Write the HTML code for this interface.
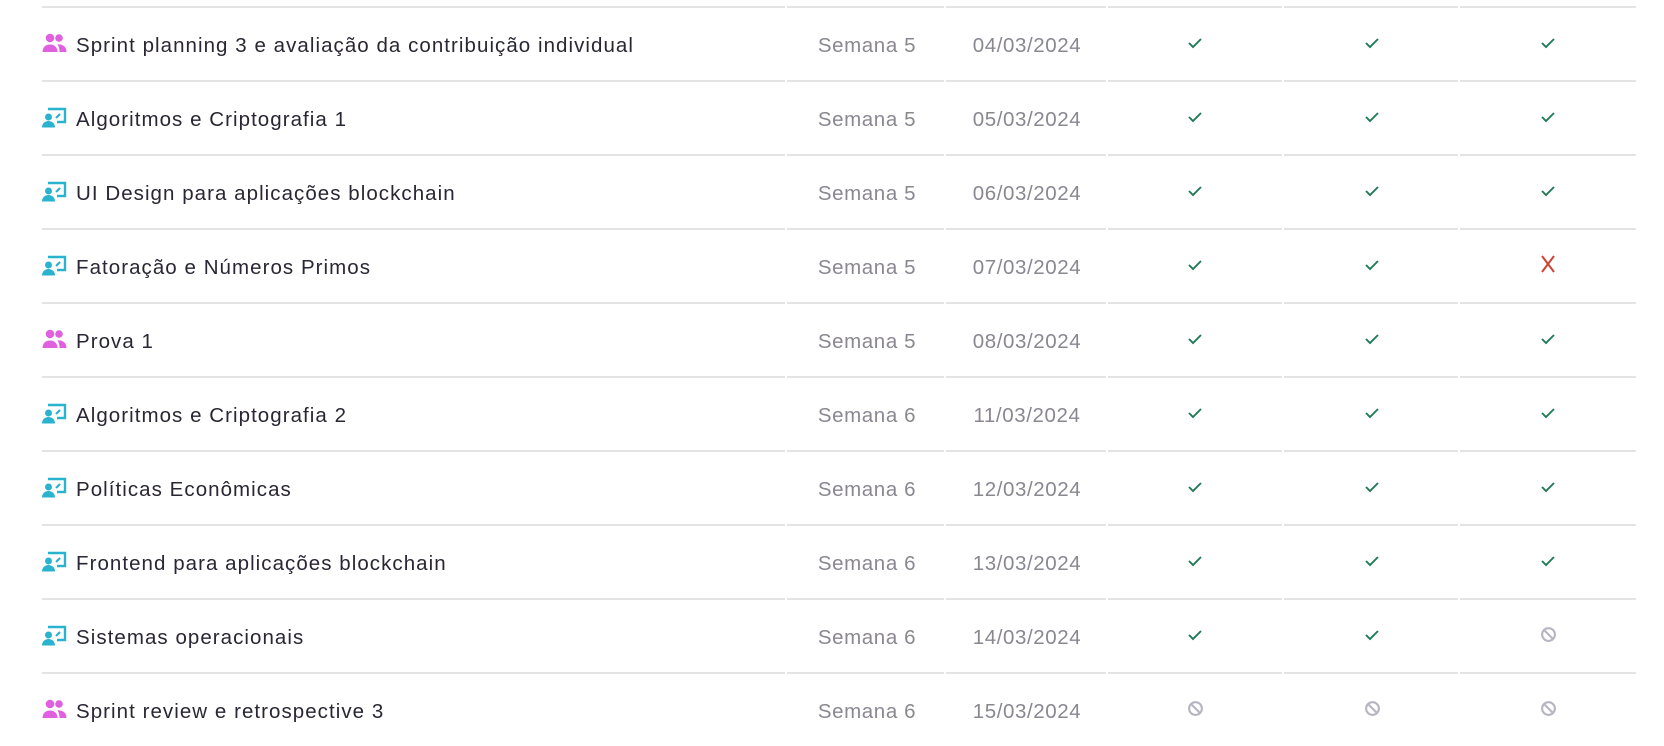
<!DOCTYPE html>
<html><head><meta charset="utf-8"><style>
body{margin:0;width:1664px;height:721px;background:#fff;overflow:hidden;font-family:"Liberation Sans",sans-serif;position:relative}
.row{position:absolute;left:0;width:1664px;height:74px}
.b{position:absolute;top:0;height:2px;background:#e3e3e3}
.t{position:absolute;left:76px;top:28px;font-size:20.5px;line-height:24px;letter-spacing:1.05px;color:#2a2633}
.s{position:absolute;top:28px;font-size:20.5px;line-height:24px;letter-spacing:0.6px;color:#8a8791;text-align:center}
.ic{position:absolute;left:42px;top:27px}
.c{position:absolute}
</style></head><body>
<div id="r"></div>
<script>
const rows=[
["p","Sprint planning 3 e avaliação da contribuição individual","Semana 5","04/03/2024","ccc"],
["t","Algoritmos e Criptografia 1","Semana 5","05/03/2024","ccc"],
["t","UI Design para aplicações blockchain","Semana 5","06/03/2024","ccc"],
["t","Fatoração e Números Primos","Semana 5","07/03/2024","ccx"],
["p","Prova 1","Semana 5","08/03/2024","ccc"],
["t","Algoritmos e Criptografia 2","Semana 6","11/03/2024","ccc"],
["t","Políticas Econômicas","Semana 6","12/03/2024","ccc"],
["t","Frontend para aplicações blockchain","Semana 6","13/03/2024","ccc"],
["t","Sistemas operacionais","Semana 6","14/03/2024","ccn"],
["p","Sprint review e retrospective 3","Semana 6","15/03/2024","nnn"]];
const ppl='<svg width="25" height="20" viewBox="0 0 25 20"><circle cx="8" cy="5" r="4.3" fill="#e060e0"/><circle cx="17" cy="5" r="3.8" fill="#e060e0"/><path d="M0.5 19c0-5 3.5-7.5 7.5-7.5s7.5 2.5 7.5 7.5z" fill="#e060e0"/><path d="M15.5 11.2c5 0 9 2 9 7.8h-7c0-3.5-0.8-5.8-2-7.8z" fill="#e060e0"/></svg>';
const tch='<svg width="25" height="21" viewBox="0 0 25 21"><path d="M6 2h17v13h-8" fill="none" stroke="#2ab3cf" stroke-width="2.4"/><path d="M14 11l4-4" stroke="#2ab3cf" stroke-width="2.2"/><circle cx="6.5" cy="10" r="3.5" fill="#2ab3cf"/><path d="M0 20.5c0-4 3-6.5 6.5-6.5s6.5 2.5 6.5 6.5z" fill="#2ab3cf"/></svg>';
const chk='<svg width="16" height="14" viewBox="0 0 16 14"><path d="M2 7l4 4 8-8" fill="none" stroke="#1f7a55" stroke-width="1.9"/></svg>';
const xx='<svg width="16" height="18" viewBox="0 0 16 18"><path d="M2 1l12 16M14 1L2 17" stroke="#cc4433" stroke-width="2"/></svg>';
const no='<svg width="17" height="17" viewBox="0 0 16 16"><circle cx="8" cy="8" r="6" fill="none" stroke="#b8b5c2" stroke-width="2"/><path d="M4 4l8 8" stroke="#b8b5c2" stroke-width="2"/></svg>';
const cols=[[42,743],[787,157],[946,160],[1108,174],[1284,174],[1460,176]];
const cx=[1195,1372,1548];
let h='';
rows.forEach((r,i)=>{
 const top=6+i*74;
 h+='<div class="row" style="top:'+top+'px">';
 cols.forEach(c=>h+='<div class="b" style="left:'+c[0]+'px;width:'+c[1]+'px"></div>');
 h+='<div class="ic">'+(r[0]=="p"?ppl:tch)+'</div><div class="t">'+r[1]+'</div>';
 h+='<div class="s" style="left:787px;width:160px">'+r[2]+'</div><div class="s" style="left:946px;width:162px">'+r[3]+'</div>';
 [...r[4]].forEach((k,j)=>{const ic=k=="c"?chk:k=="x"?xx:no;h+='<div class="c" style="left:'+(cx[j]-8)+'px;top:'+(k=="c"?30:k=="x"?27:28)+'px">'+ic+'</div>';});
 h+='</div>';
});
document.getElementById('r').innerHTML=h;
</script>
</body></html>
